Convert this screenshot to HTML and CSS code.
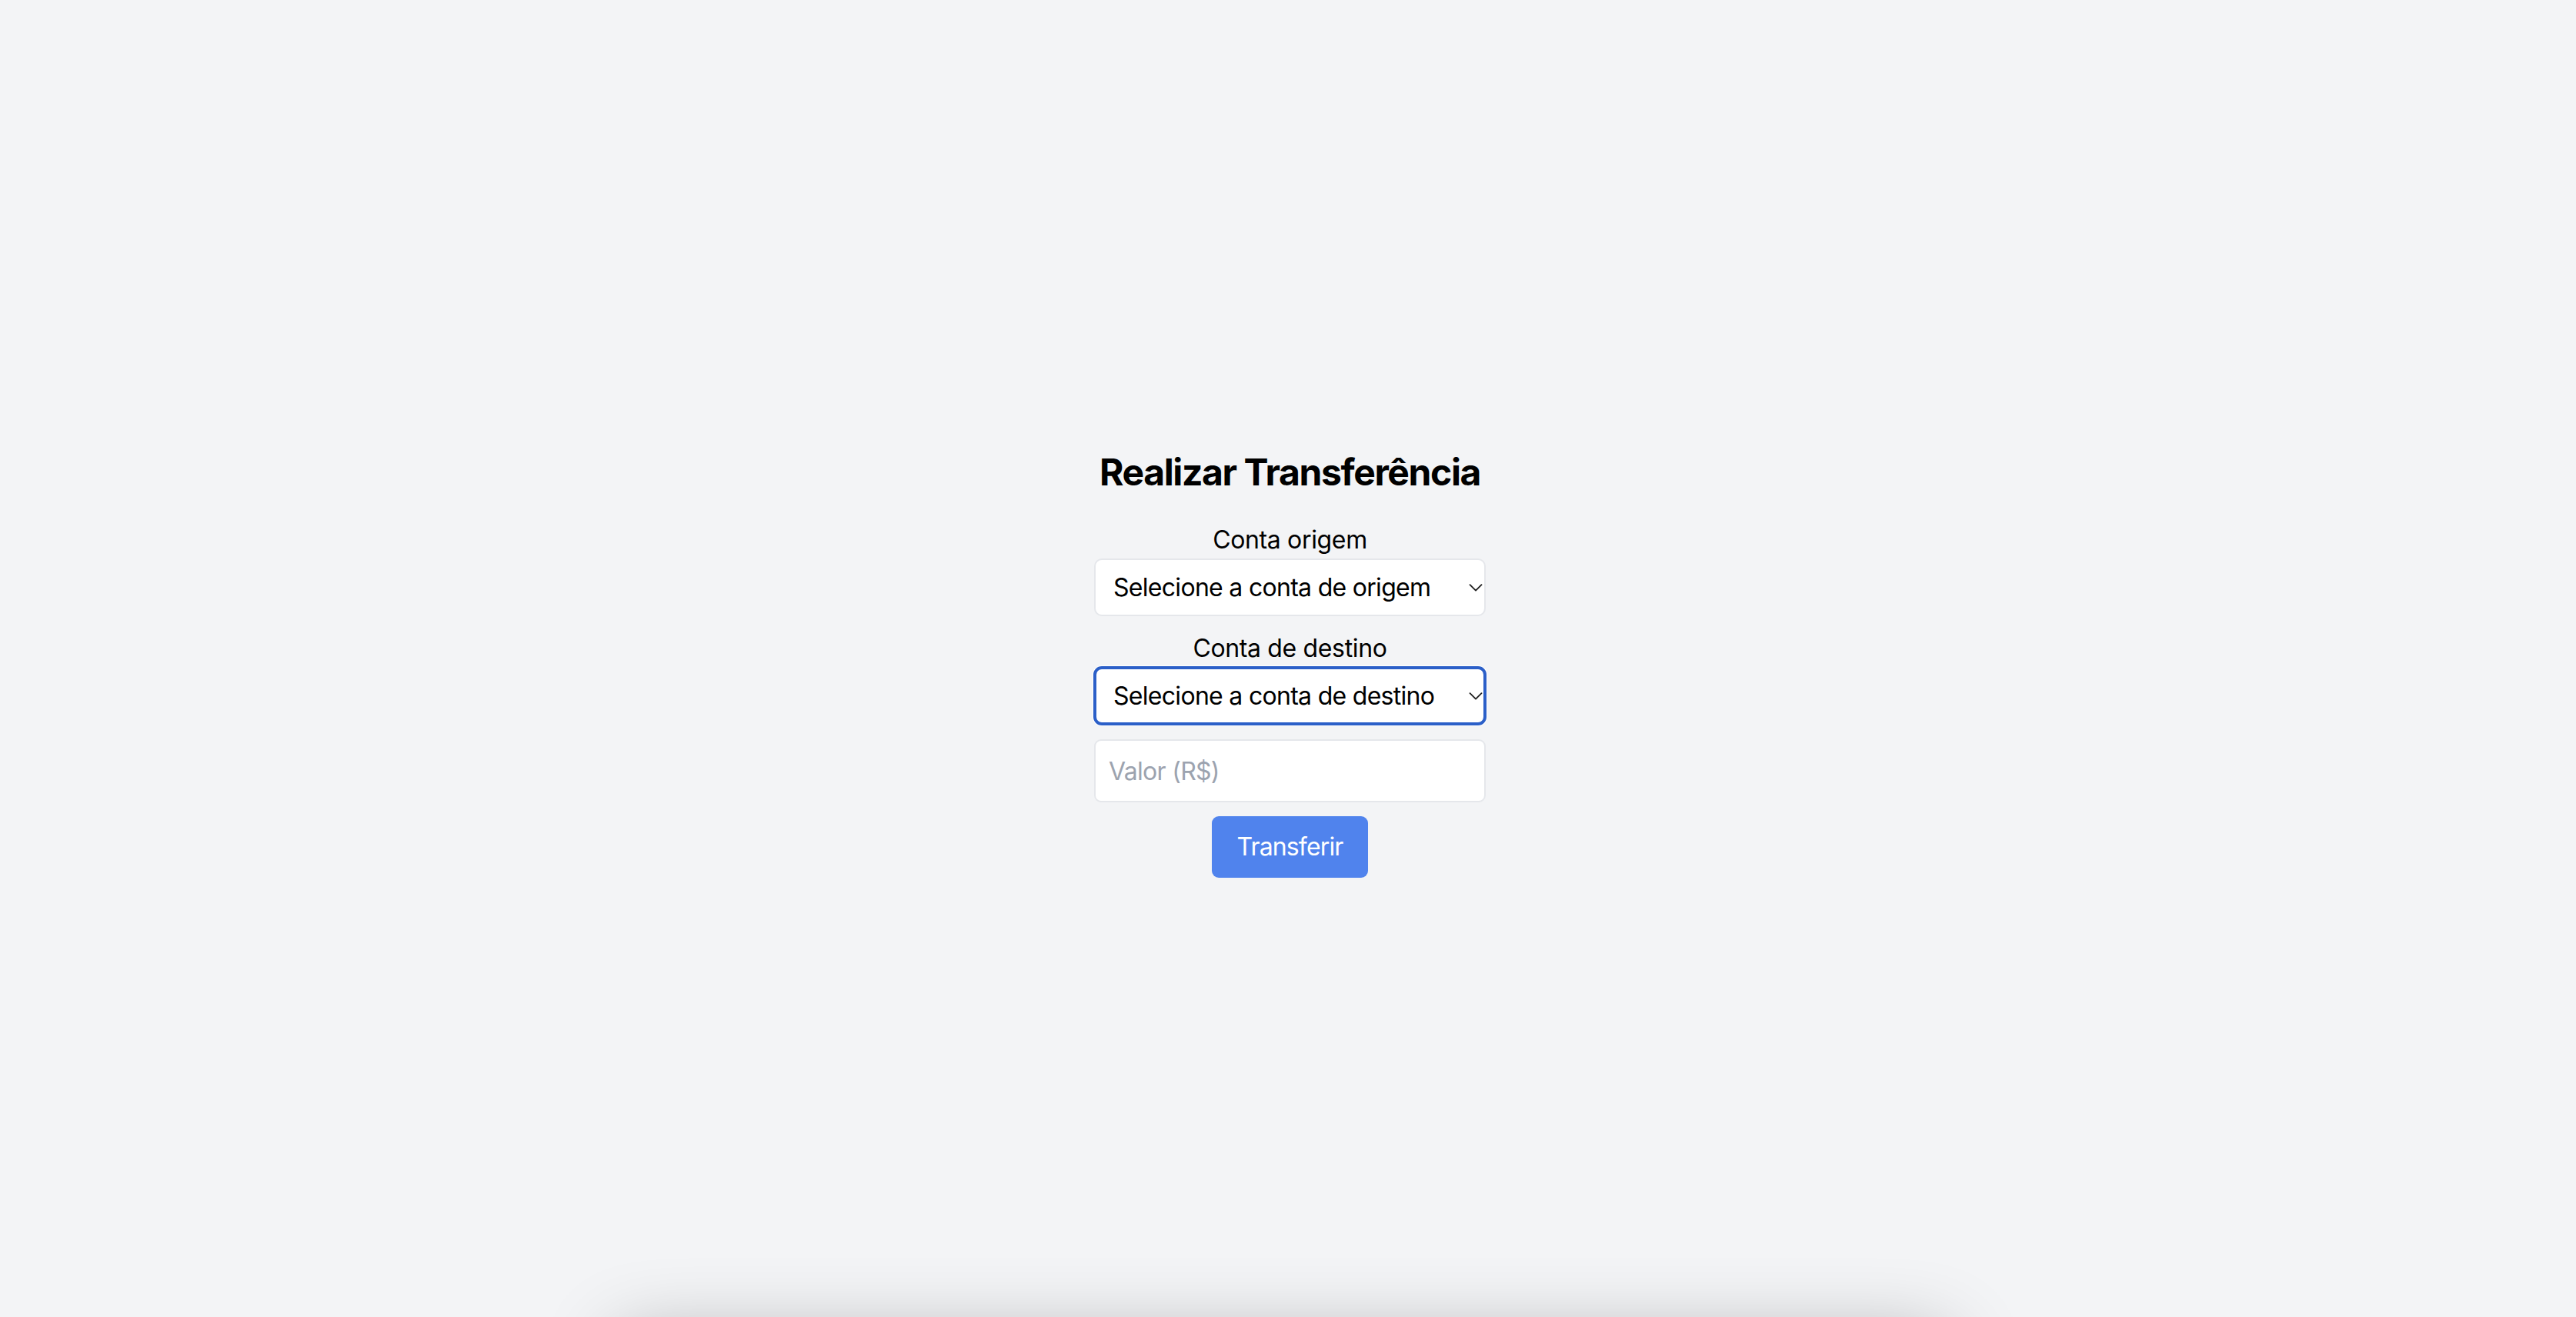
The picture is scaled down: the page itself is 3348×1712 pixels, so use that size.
FILE: index.html
```html
<!DOCTYPE html>
<html lang="pt-BR">
<head>
<meta charset="utf-8">
<title>Realizar Transferência</title>
<link rel="stylesheet" href="styles.css">
</head>
<body>
<main class="page">
  <form class="form">
    <h1 class="title">Realizar Transferência</h1>
    <label class="label" for="origem">Conta origem</label>
    <div class="select-wrap">
      <select id="origem" class="select">
        <option>Selecione a conta de origem</option>
      </select>
      <svg class="chev" viewBox="0 0 18 10" width="18" height="10"><path d="M1.5 1.2 L9 8.6 L16.5 1.2" fill="none" stroke="#1f1f1f" stroke-width="1.8" stroke-linecap="round" stroke-linejoin="round"/></svg>
    </div>
    <label class="label label-gap" for="destino">Conta de destino</label>
    <div class="select-wrap">
      <select id="destino" class="select select-focus">
        <option>Selecione a conta de destino</option>
      </select>
      <svg class="chev" viewBox="0 0 18 10" width="18" height="10"><path d="M1.5 1.2 L9 8.6 L16.5 1.2" fill="none" stroke="#1f1f1f" stroke-width="1.8" stroke-linecap="round" stroke-linejoin="round"/></svg>
    </div>
    <input class="input" type="text" placeholder="Valor (R$)">
    <button class="btn" type="button">Transferir</button>
  </form>
</main>
<div class="below-card"></div>
</body>
</html>
```

FILE: styles.css
```css
html, body {
  margin: 0;
  padding: 0;
  background: #f3f4f6;
  overflow: hidden;
}

body {
  font-family: Inter, "Noto Sans", "Liberation Sans", sans-serif;
  color: #000;
  letter-spacing: -0.022em;
}

.page {
  box-sizing: border-box;
  min-height: 1712px;
  padding: 582px 0 0 5px;
}

.form {
  width: 509px;
  margin: 0 auto;
  display: flex;
  flex-direction: column;
}

.title {
  margin: 0 0 32px;
  font-size: 48px;
  line-height: 64px;
  font-weight: 700;
  letter-spacing: -0.029em;
  text-align: center;
  white-space: nowrap;
}

.label {
  display: block;
  font-size: 32px;
  line-height: 48px;
  text-align: center;
}

.label-gap {
  margin-top: 18px;
}

.select-wrap {
  position: relative;
  height: 75px;
}

.select {
  -webkit-appearance: none;
  appearance: none;
  box-sizing: border-box;
  width: 100%;
  height: 75px;
  margin: 0;
  padding: 0 40px 0 23px;
  border: 2px solid #e5e7eb;
  border-radius: 10px;
  background: #fff;
  font-family: inherit;
  font-size: 32px;
  line-height: 48px;
  letter-spacing: -0.022em;
  color: #000;
}

.select-focus {
  outline: 4px solid #2b5fc8;
  outline-offset: -3px;
  box-shadow: 0 0 0 2px #fff;
}

.chev {
  position: absolute;
  right: 4px;
  top: 33px;
  pointer-events: none;
}

.input {
  box-sizing: border-box;
  width: 100%;
  height: 82px;
  margin: 19px 0 0;
  padding: 0 17px;
  border: 2px solid #e5e7eb;
  border-radius: 9px;
  background: #fff;
  font-family: inherit;
  font-size: 32px;
  line-height: 48px;
  letter-spacing: -0.022em;
  color: #000;
  outline: none;
}

.input::placeholder {
  color: #9ca3af;
}

.btn {
  align-self: center;
  box-sizing: border-box;
  height: 80px;
  margin-top: 18px;
  padding: 0 33px;
  border: 0;
  border-radius: 9px;
  background: #5083ed;
  color: #fff;
  font-family: inherit;
  font-size: 32px;
  line-height: 48px;
  letter-spacing: -0.027em;
}

.below-card {
  position: fixed;
  left: 805px;
  width: 1725px;
  top: 1740px;
  height: 300px;
  background: #fff;
  box-shadow: 0 0 100px rgba(0, 0, 0, 0.3);
}
```
